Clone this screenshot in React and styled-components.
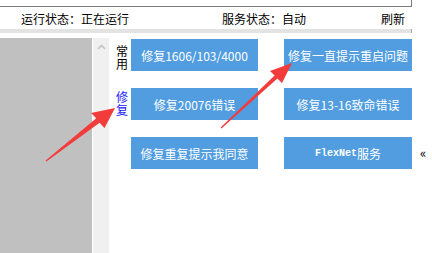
import React from 'react';
import styled, { createGlobalStyle } from 'styled-components';

const GlobalStyle = createGlobalStyle`
  html, body {
    margin: 0;
    padding: 0;
    background: #ffffff;
  }
  body {
    width: 432px;
    height: 253px;
    overflow: hidden;
    font-family: "Noto Sans CJK SC", "Liberation Sans", sans-serif;
  }
`;

const buttons = [
  { label: '修复1606/103/4000' },
  { label: '修复一直提示重启问题' },
  { label: '修复20076错误' },
  { label: '修复13-16致命错误' },
  { label: '修复重复提示我同意' },
  { label: 'FlexNet', tail: '服务' },
];

const Page = styled.div`
  position: relative;
  width: 432px;
  height: 253px;
  display: flex;
  flex-direction: column;
`;

const InputEdge = styled.div`
  width: 411px;
  height: 6px;
  border-right: 1px solid #7a7a7a;
  border-bottom: 1px solid #7a7a7a;
`;

const StatusRow = styled.div`
  height: 22px;
  display: flex;
  align-items: center;
  font-size: 12px;
  color: #000;
  padding-left: 21px;
`;

const StatusItem = styled.span`
  width: ${p => p.$w}px;
  flex-shrink: 0;
  white-space: nowrap;
`;

const Divider = styled.div`
  width: 411px;
  height: 4px;
  background: #e3e3e3;
  border-right: 1px solid #a8a8a8;
`;

const Main = styled.div`
  margin-top: 5px;
  flex: 1;
  display: flex;
`;

const LeftPanel = styled.div`
  width: 92px;
  background: #c0c0c0;
  border-right: 1px solid #ffffff;
`;

const ScrollTrack = styled.div`
  width: 16px;
  background: #f0f0f0;
  display: flex;
  justify-content: center;
  padding-top: 6px;
  box-sizing: border-box;
`;

const Content = styled.div`
  flex: 1;
  display: flex;
  padding: 1px 0 0 7px;
  align-items: flex-start;
`;

const Tabs = styled.div`
  width: 12px;
  display: flex;
  flex-direction: column;
  gap: 20px;
  padding-top: 5px;
  margin-right: 3px;
`;

const Tab = styled.div`
  font-size: 12px;
  line-height: 13px;
  width: 12px;
  color: ${p => (p.$active ? '#1b1bff' : '#000')};
`;

const Grid = styled.div`
  display: grid;
  grid-template-columns: 127px 128px;
  column-gap: 26px;
  row-gap: 17px;
`;

const ActionButton = styled.div`
  height: 32px;
  background: #519ddf;
  color: #ffffff;
  display: flex;
  align-items: center;
  justify-content: center;
  font-size: 12px;
  white-space: nowrap;
`;

const Mono = styled.span`
  font-family: "Liberation Mono", monospace;
  font-size: 10px;
  font-weight: bold;
`;

const Collapse = styled.div`
  font-size: 13px;
  color: #000;
  margin: 104px 0 0 8px;
`;

const Overlay = styled.svg`
  position: absolute;
  left: 0;
  top: 0;
  pointer-events: none;
`;

export default function App() {
  return (
    <Page>
      <GlobalStyle />
      <InputEdge />
      <StatusRow>
        <StatusItem $w={201}>运行状态：正在运行</StatusItem>
        <StatusItem $w={159}>服务状态：自动</StatusItem>
        <StatusItem $w={30}>刷新</StatusItem>
      </StatusRow>
      <Divider />
      <Main>
        <LeftPanel />
        <ScrollTrack>
          <svg width="9" height="6" viewBox="0 0 9 6">
            <path d="M1 5 L4.5 1.5 L8 5" fill="none" stroke="#c4c4c4" strokeWidth="1.6" />
          </svg>
        </ScrollTrack>
        <Content>
          <Tabs>
            <Tab>常用</Tab>
            <Tab $active>修复</Tab>
          </Tabs>
          <Grid>
            {buttons.map(b => (
              <ActionButton key={b.label}>
                {b.tail ? (
                  <>
                    <Mono>{b.label}</Mono>
                    {b.tail}
                  </>
                ) : (
                  b.label
                )}
              </ActionButton>
            ))}
          </Grid>
          <Collapse>«</Collapse>
        </Content>
      </Main>
      <Overlay width="432" height="253" viewBox="0 0 432 253">
        <polygon points="45.6,160.4 96.3,118.2 91,113 115,108 104.5,128 99.6,122.7 46.4,161.6" fill="#f23b3b" />
        <polygon points="220.6,127.5 274.6,75.5 270,71 292,63 282,83 277.4,78.5 221.4,128.5" fill="#f23b3b" />
      </Overlay>
    </Page>
  );
}
